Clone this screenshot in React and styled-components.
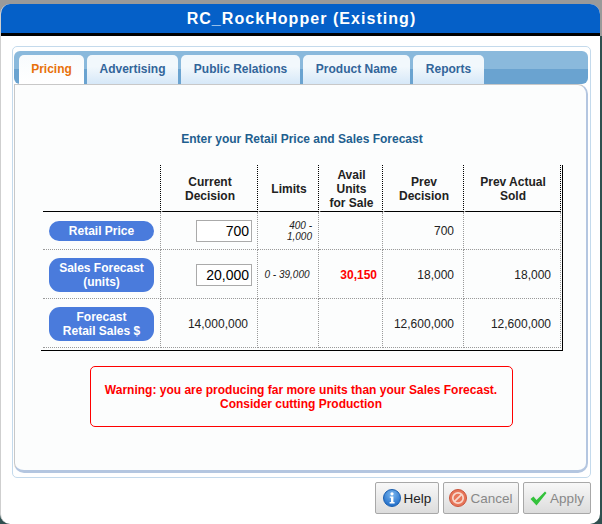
import styled, { createGlobalStyle } from 'styled-components';

const GlobalStyle = createGlobalStyle`
  html, body {
    margin: 0;
    padding: 0;
    background: #ffffff;
  }
  * {
    box-sizing: border-box;
  }
`;

const Frame = styled.div`
  width: 602px;
  height: 524px;
  padding-top: 4px;
  background: linear-gradient(#9a9a9a 0 36px, #2f4f4f 36px);
  overflow: hidden;
  font-family: 'Liberation Sans', Arial, sans-serif;
`;

const Dialog = styled.div`
  width: 600px;
  height: 520px;
  display: flex;
  flex-direction: column;
  background: #ffffff;
  border-radius: 10px;
  border-left: 1px solid #cfcfcf;
  overflow: hidden;
`;

const TitleBar = styled.div`
  height: 32px;
  flex: none;
  padding: 6px 0 0 2px;
  background: #0560c8;
  border-bottom: 3px solid #000000;
  color: #ffffff;
  font-size: 16px;
  font-weight: bold;
  letter-spacing: 1.05px;
  text-align: center;
`;

const Outer = styled.div`
  width: 579px;
  height: 432px;
  margin: 10px 0 0 11px;
  padding: 4px 2px 4px 1px;
  flex: none;
  display: flex;
  flex-direction: column;
  border: 1px solid #c4daec;
  border-radius: 5px;
`;

const TabBar = styled.div`
  height: 33px;
  flex: none;
  display: flex;
  align-items: flex-end;
  gap: 3px;
  padding-left: 5px;
  border-radius: 6px;
  background: linear-gradient(#8ab9dc 0 55%, #6aa3d0 55% 100%);
`;

const Tab = styled.div`
  height: 29px;
  width: ${props => props.$width}px;
  padding-top: 7px;
  text-align: center;
  font-size: 12px;
  font-weight: bold;
  border-radius: 5px 5px 0 0;
  color: ${props => (props.$active ? '#e8710a' : '#32659a')};
  background: ${props =>
    props.$active
      ? 'linear-gradient(#f8fbfd, #ffffff)'
      : 'linear-gradient(#f2f8fc, #f2f8fc 40%, #d6e8f8)'};
`;

const Content = styled.div`
  flex: 1;
  padding: 47px 0 0 3px;
  display: flex;
  flex-direction: column;
  align-items: center;
  background: #fcfdfd;
  border-top: 1px solid #c8c8c8;
  border-left: 1px solid #c8c8c8;
  border-right: 2px solid #b4c6e0;
  border-bottom: 3px solid #b4c6e0;
  border-radius: 0 10px 10px 10px;
`;

const Heading = styled.div`
  font-size: 12px;
  font-weight: bold;
  color: #1f5f8f;
`;

const DecisionTable = styled.table`
  width: 522px;
  margin-top: 19px;
  padding: 0 1px 2px 2px;
  border-collapse: separate;
  border-spacing: 0;
  table-layout: fixed;
  border-right: 1px solid #000000;
  border-bottom: 1px solid #000000;
  font-size: 12px;
  color: #222222;
`;

const HeadCell = styled.th`
  width: ${props => props.$width}px;
  height: 47px;
  padding: 2px 0 0;
  font-size: 12px;
  font-weight: bold;
  line-height: 14px;
  color: #222222;
  border-left: 2px solid transparent;
  border-right: 1px dotted #000000;
  border-bottom: 1px solid #000000;
  &:first-child {
    border-left: 0;
  }
`;

const Cell = styled.td`
  padding: ${props => {
    if (props.$label) return '1px 0 0 6px';
    if (props.$alert) return '1px 5px 0 0';
    return '1px 9px 0 0';
  }};
  text-align: right;
  color: ${props => (props.$alert ? '#ff0000' : 'inherit')};
  font-weight: ${props => (props.$alert ? 'bold' : 'normal')};
  border-right: 1px dotted #999999;
  border-bottom: 1px dotted #999999;
`;

const Row = styled.tr`
  height: ${props => props.$height}px;
`;

const Pill = styled.div`
  width: 105px;
  min-height: 20px;
  padding: 3px 0;
  border-radius: 11px;
  background: #4a7bdc;
  color: #ffffff;
  font-weight: bold;
  line-height: 14px;
  text-align: center;
`;

const ValueBox = styled.div`
  width: 56px;
  height: 22px;
  margin: 0 -4px 0 auto;
  padding-right: 2px;
  background: #ffffff;
  border: 1px solid #aaaaaa;
  color: #000000;
  font-size: 14px;
  line-height: 20px;
  text-align: right;
`;

const Limit = styled.div`
  font-size: 10px;
  font-style: italic;
  line-height: 11px;
  text-align: ${props => (props.$centered ? 'center' : 'right')};
  margin-right: ${props => (props.$centered ? '-7px' : '-3px')};
`;

const Warning = styled.div`
  width: 423px;
  height: 61px;
  margin: 15px 2px 0 0;
  padding-top: 16px;
  border: 1px solid #ff0000;
  border-radius: 5px;
  color: #ff0000;
  font-size: 12px;
  font-weight: bold;
  line-height: 14px;
  text-align: center;
`;

const Footer = styled.div`
  display: flex;
  justify-content: flex-end;
  gap: 4px;
  margin-top: 4px;
  padding-right: 9px;
`;

const ActionButton = styled.div`
  width: ${props => props.$width}px;
  height: 32px;
  display: flex;
  align-items: center;
  justify-content: center;
  gap: 3px;
  border: 1px solid #a8a8a8;
  border-radius: 2px;
  background: linear-gradient(#f8f8f8, #dcdcdc);
  color: ${props => (props.$muted ? '#888888' : '#222222')};
  font-size: 13.5px;
`;

const InfoIcon = () => (
  <svg width="18" height="18" viewBox="0 0 18 18">
    <defs>
      <radialGradient id="infoFill" cx="50%" cy="30%" r="70%">
        <stop offset="0%" stopColor="#7db8ee" />
        <stop offset="100%" stopColor="#1c6ac8" />
      </radialGradient>
    </defs>
    <circle cx="9" cy="9" r="8.5" fill="url(#infoFill)" stroke="#1c5fae" />
    <circle cx="9" cy="4.8" r="1.6" fill="#ffffff" />
    <path d="M6.8 7.4h3.6v5.6h1.2v1.4H6.6V13h1.4V8.8H6.8z" fill="#ffffff" />
  </svg>
);

const CancelIcon = () => (
  <svg width="18" height="18" viewBox="0 0 18 18">
    <circle cx="9" cy="9" r="8.5" fill="#e8765a" stroke="#c9543c" />
    <circle cx="9" cy="9" r="5.2" fill="none" stroke="#f8d8cc" strokeWidth="1.7" />
    <path d="M5.3 12.7L12.7 5.3" stroke="#f8d8cc" strokeWidth="1.7" />
  </svg>
);

const CheckIcon = () => (
  <svg width="17" height="15" viewBox="0 0 17 15">
    <path d="M0.5 8L3.5 5.5L6.5 9L15 0.5L16.5 2L6.5 14.5z" fill="#34c23c" />
  </svg>
);

const tabs = [
  { label: 'Pricing', width: 65, active: true },
  { label: 'Advertising', width: 91 },
  { label: 'Public Relations', width: 119 },
  { label: 'Product Name', width: 107 },
  { label: 'Reports', width: 71 },
];

const App = () => (
  <Frame>
    <GlobalStyle />
    <Dialog>
      <TitleBar>RC_RockHopper (Existing)</TitleBar>
      <Outer>
        <TabBar>
          {tabs.map(tab => (
            <Tab key={tab.label} $width={tab.width} $active={tab.active}>
              {tab.label}
            </Tab>
          ))}
        </TabBar>
        <Content>
          <Heading>Enter your Retail Price and Sales Forecast</Heading>
          <DecisionTable>
            <thead>
              <tr>
                <HeadCell $width={118} />
                <HeadCell $width={97}>Current<br />Decision</HeadCell>
                <HeadCell $width={61}>Limits</HeadCell>
                <HeadCell $width={64}>Avail<br />Units<br />for Sale</HeadCell>
                <HeadCell $width={81}>Prev<br />Decision</HeadCell>
                <HeadCell $width={97}>Prev Actual<br />Sold</HeadCell>
              </tr>
            </thead>
            <tbody>
              <Row $height={38}>
                <Cell $label><Pill>Retail Price</Pill></Cell>
                <Cell><ValueBox>700</ValueBox></Cell>
                <Cell><Limit>400 -<br />1,000</Limit></Cell>
                <Cell />
                <Cell>700</Cell>
                <Cell />
              </Row>
              <Row $height={49}>
                <Cell $label><Pill>Sales Forecast<br />(units)</Pill></Cell>
                <Cell><ValueBox>20,000</ValueBox></Cell>
                <Cell><Limit $centered>0 - 39,000</Limit></Cell>
                <Cell $alert>30,150</Cell>
                <Cell>18,000</Cell>
                <Cell>18,000</Cell>
              </Row>
              <Row $height={49}>
                <Cell $label><Pill>Forecast<br />Retail Sales $</Pill></Cell>
                <Cell>14,000,000</Cell>
                <Cell />
                <Cell />
                <Cell>12,600,000</Cell>
                <Cell>12,600,000</Cell>
              </Row>
            </tbody>
          </DecisionTable>
          <Warning>
            Warning: you are producing far more units than your Sales Forecast.
            <br />
            Consider cutting Production
          </Warning>
        </Content>
      </Outer>
      <Footer>
        <ActionButton $width={64}><InfoIcon />Help</ActionButton>
        <ActionButton $width={76} $muted><CancelIcon />Cancel</ActionButton>
        <ActionButton $width={68} $muted><CheckIcon />Apply</ActionButton>
      </Footer>
    </Dialog>
  </Frame>
);

export default App;
